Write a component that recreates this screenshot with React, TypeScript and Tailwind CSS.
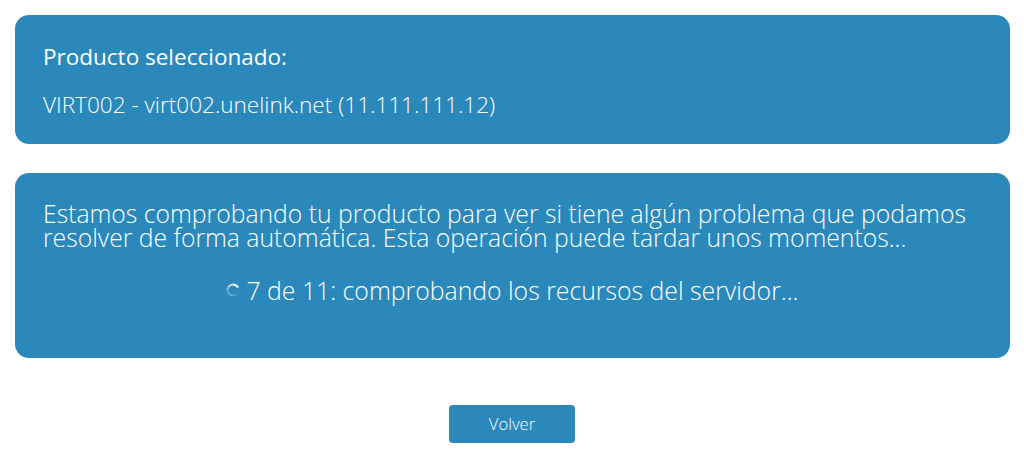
export default function App() {
  return (
    <div className="w-[1024px] h-[456px] bg-white px-[15px] pt-[15px] font-['Open_Sans',sans-serif] text-white overflow-hidden">
      <div className="h-[129px] w-[995px] rounded-[14px] bg-[#2a88bb] pl-[28px] pt-[27px]">
        <div className="text-[22.5px] leading-[30px] font-normal">Producto seleccionado:</div>
        <div className="mt-[18px] text-[22.55px] leading-[30px] font-light">VIRT002 - virt002.unelink.net (11.111.111.12)</div>
      </div>
      <div className="mt-[29px] h-[185px] w-[995px] rounded-[14px] bg-[#2a88bb] px-[28px] pt-[29px]">
        <p className="text-[24.72px] leading-[24px] font-light">Estamos comprobando tu producto para ver si tiene algún problema que podamos resolver de forma automática. Esta operación puede tardar unos momentos...</p>
        <div className="mt-[25px] flex items-center justify-center text-[24.8px] leading-[30px] font-light">
          <svg width="14" height="14" viewBox="0 0 14 14" className="mr-[6px]" fill="none">
            <path d="M7 1.5A5.5 5.5 0 0 1 12 4.7" stroke="#ffffff" strokeOpacity="0.95" strokeWidth="2" />
            <path d="M2.5 3.8A5.5 5.5 0 0 1 7 1.5" stroke="#ffffff" strokeOpacity="0.7" strokeWidth="2" />
            <path d="M1.5 7A5.5 5.5 0 0 1 2.5 3.8" stroke="#ffffff" strokeOpacity="0.45" strokeWidth="2" />
            <path d="M7 12.5A5.5 5.5 0 0 1 1.5 7" stroke="#ffffff" strokeOpacity="0.3" strokeWidth="2" />
            <path d="M11 10.8A5.5 5.5 0 0 1 7 12.5" stroke="#ffffff" strokeOpacity="0.15" strokeWidth="2" />
          </svg>
          <span>7 de 11: comprobando los recursos del servidor...</span>
        </div>
      </div>
      <div className="mt-[47px] flex justify-center">
        <button className="h-[38px] w-[126px] rounded-[4px] bg-[#2a88bb] text-[16.6px] font-light text-white">Volver</button>
      </div>
    </div>
  );
}
